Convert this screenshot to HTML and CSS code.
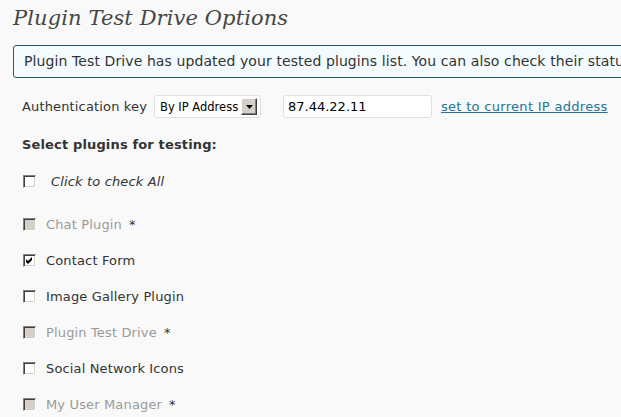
FILE: index.html
```html
<!DOCTYPE html>
<html>
<head>
<meta charset="utf-8">
<link rel="stylesheet" href="styles.css">
</head>
<body>
<div class="wrap">
  <h2 class="title">Plugin Test Drive Options</h2>
  <div class="notice">Plugin Test Drive has updated your tested plugins list. You can also check their status</div>
  <div class="auth">
    <span class="auth-label">Authentication key</span>
    <div class="select"><span class="select-text">By IP Address</span><span class="select-btn"><svg width="7" height="4" viewBox="0 0 7 4"><path d="M0 0h7L3.5 4z" fill="#000"/></svg></span></div>
    <div class="input">87.44.22.11</div>
    <a class="link" href="#">set to current IP address</a>
  </div>
  <h3 class="heading">Select plugins for testing:</h3>
  <div class="row all"><span class="cb"></span><span class="lbl italic">Click to check All</span></div>
  <div class="list">
    <div class="row"><span class="cb disabled"></span><span class="lbl muted">Chat Plugin</span><span class="star">*</span></div>
    <div class="row"><span class="cb"><svg width="9" height="9" viewBox="0 0 9 9"><path d="M1 3l2 2 4-4v3l-4 4-2-2z" fill="#000"/></svg></span><span class="lbl">Contact Form</span></div>
    <div class="row"><span class="cb"></span><span class="lbl">Image Gallery Plugin</span></div>
    <div class="row"><span class="cb disabled"></span><span class="lbl muted">Plugin Test Drive</span><span class="star">*</span></div>
    <div class="row"><span class="cb"></span><span class="lbl">Social Network Icons</span></div>
    <div class="row"><span class="cb disabled"></span><span class="lbl muted">My User Manager</span><span class="star">*</span></div>
  </div>
</div>
</body>
</html>
```

FILE: styles.css
```css
html, body {
  margin: 0;
  padding: 0;
  background: #f9f9f9;
}
body {
  font-family: "DejaVu Sans", Verdana, sans-serif;
  font-size: 13px;
  letter-spacing: 0.15px;
  color: #333;
  overflow: hidden;
}
.wrap {
  padding-left: 13px;
  width: 900px;
}
.title {
  margin: 0;
  height: 45px;
  font-family: "DejaVu Serif", Georgia, serif;
  font-style: italic;
  font-weight: normal;
  font-size: 21px;
  line-height: 37px;
  letter-spacing: 0.1px;
  color: #464646;
}
.notice {
  height: 31px;
  line-height: 31px;
  border: 1px solid #1b5a74;
  border-radius: 3px;
  background: #f4fbfe;
  padding-left: 10px;
  white-space: nowrap;
  font-size: 14px;
  letter-spacing: 0.1px;
  color: #333;
}
.auth {
  display: flex;
  align-items: center;
  margin-top: 17px;
  height: 23px;
  padding-left: 9px;
}
.auth-label {
  width: 132px;
  color: #333;
}
.select {
  display: flex;
  align-items: center;
  justify-content: space-between;
  box-sizing: border-box;
  width: 107px;
  height: 23px;
  border: 1px solid #dfdfdf;
  border-radius: 3px;
  background: #fff;
  padding: 0 3px 0 5px;
  font-size: 11.5px;
  letter-spacing: 0;
  white-space: nowrap;
  color: #000;
}
.select-btn {
  box-sizing: border-box;
  flex: none;
  width: 16px;
  height: 17px;
  background: #d4d0c8;
  border: 1px solid;
  border-color: #fff #404040 #404040 #fff;
  box-shadow: inset -1px -1px 0 #808080;
  display: flex;
  align-items: center;
  justify-content: center;
}
.input {
  box-sizing: border-box;
  margin-left: 22px;
  width: 149px;
  height: 23px;
  line-height: 21px;
  border: 1px solid #dfdfdf;
  border-radius: 3px;
  background: #fff;
  padding-left: 4px;
  letter-spacing: 0;
  color: #000;
}
.link {
  margin-left: 9px;
  color: #21759b;
  letter-spacing: 0.3px;
  text-decoration: underline;
}
.heading {
  margin: 0;
  margin-top: 18px;
  padding-left: 9px;
  font-size: 13px;
  font-weight: bold;
  line-height: 18px;
  color: #333;
}
.row {
  display: flex;
  align-items: center;
  height: 36px;
  padding-left: 10px;
}
.all {
  margin-top: 9px;
  margin-bottom: 7px;
}
.cb {
  box-sizing: border-box;
  flex: none;
  width: 13px;
  height: 13px;
  border: 1px solid;
  border-color: #808080 #fff #fff #808080;
  box-shadow: inset 1px 1px 0 #404040, inset -1px -1px 0 #d4d0c8;
  background: #fff;
  display: flex;
  align-items: center;
  justify-content: center;
}
.cb.disabled {
  background: #d4d0c8;
}
.lbl {
  margin-left: 10px;
}
.italic {
  font-style: italic;
  margin-left: 15px;
}
.muted {
  color: #999;
}
.star {
  margin-left: 7px;
  color: #333;
}
```
